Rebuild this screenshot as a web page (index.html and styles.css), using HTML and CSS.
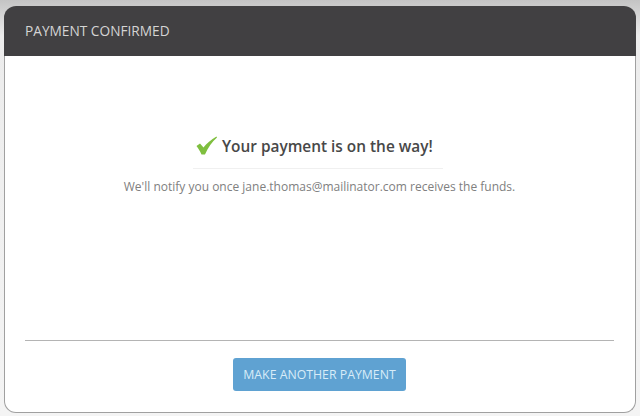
FILE: index.html
```html
<!DOCTYPE html>
<html lang="en">
<head>
  <meta charset="UTF-8">
  <meta name="viewport" content="width=device-width, initial-scale=1.0">
  <title>Payment Confirmed</title>
  <link rel="stylesheet" href="styles.css">
</head>
<body>
  <div class="panel">
    <div class="panel-header">PAYMENT CONFIRMED</div>
    <div class="panel-body">
      <div class="message">
        <h1 class="title">
          <svg class="check" width="22" height="20" viewBox="0 0 22 20">
            <path d="M0.500 10 L4 7.500 L7.500 11.500 C10.500 7.500 15 3.500 20.500 0.500 L21 1.500 C16 6 12 11.500 9 18.500 L5.500 18.500 C4 15 2.500 12.500 0.500 10 Z" fill="#7fbf3f"/>
          </svg>
          Your payment is on the way!
        </h1>
        <p class="note">We'll notify you once jane.thomas@mailinator.com receives the funds.</p>
      </div>
      <div class="actions">
        <button class="btn">MAKE ANOTHER PAYMENT</button>
      </div>
    </div>
  </div>
</body>
</html>
```

FILE: styles.css
```css
html, body {
  height: 100%;
}

body {
  margin: 0;
  padding: 6px 4px 3px 4px;
  box-sizing: border-box;
  overflow: hidden;
  background: linear-gradient(#c4c4c4, #ececec 36px, #f4f4f4);
  font-family: 'Open Sans', sans-serif;
}

.panel {
  display: flex;
  flex-direction: column;
  height: 100%;
  box-sizing: border-box;
  background-color: #fff;
  border: 1px solid #a0a0a0;
  border-top: none;
  border-radius: 12px;
}

.panel-header {
  height: 50px;
  margin: 0 -1px;
  padding-left: 21px;
  line-height: 50px;
  font-size: 13.700px;
  color: #d4d4d4;
  background-color: #414042;
  border-radius: 12px 12px 0 0;
}

.panel-body {
  flex: 1;
  display: flex;
  flex-direction: column;
  padding: 0 21px 0 20px;
}

.message {
  flex: 1;
  padding-top: 79px;
}

.title {
  width: 247px;
  margin: 0 0 0 168px;
  padding: 0 0 9px 3px;
  font-size: 15.400px;
  font-weight: 600;
  line-height: 24px;
  color: #484848;
  white-space: nowrap;
  border-bottom: 1px solid #f0f0f0;
}

.check {
  vertical-align: -4px;
}

.note {
  margin: 9px 0 0;
  font-size: 12px;
  line-height: 18px;
  text-align: center;
  color: #808080;
}

.actions {
  height: 72px;
  box-sizing: border-box;
  padding-top: 17px;
  border-top: 1px solid #b4b4b4;
  text-align: center;
}

.btn {
  width: 173px;
  height: 33px;
  padding: 0;
  border: none;
  border-radius: 3px;
  font-family: inherit;
  font-size: 12.300px;
  color: #d8ecf8;
  background-color: #5fa2d2;
  cursor: pointer;
}
```
